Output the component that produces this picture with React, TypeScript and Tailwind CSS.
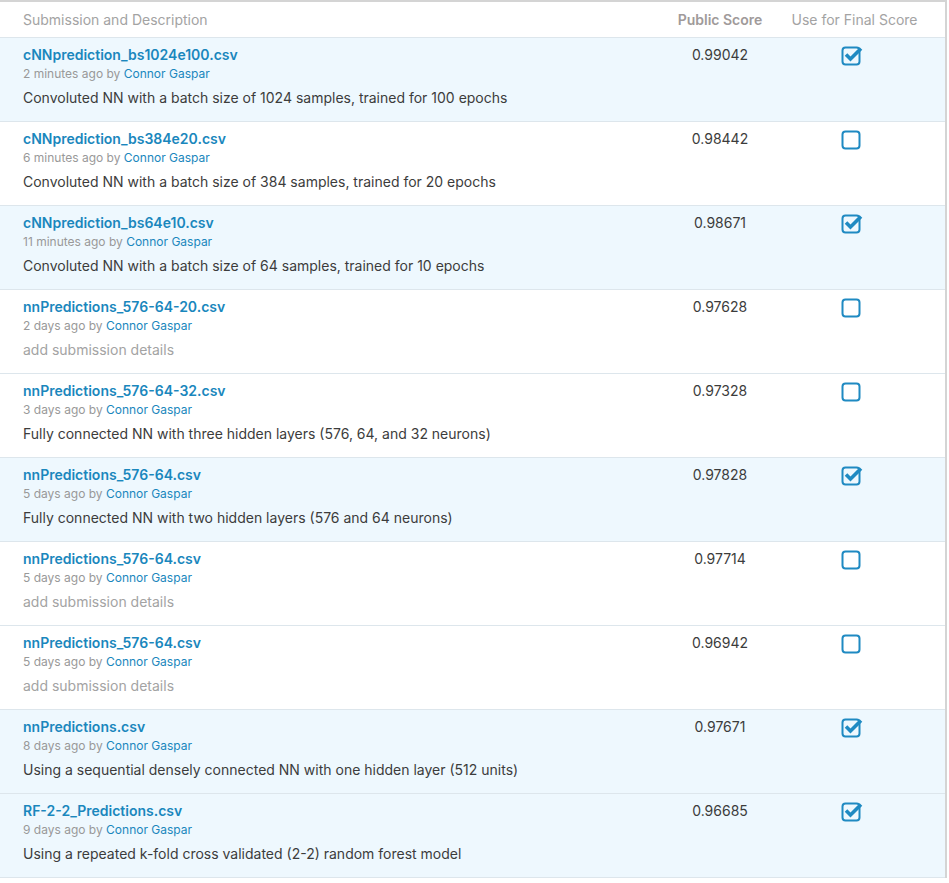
const rows = [
  { file: "cNNprediction_bs1024e100.csv", when: "2 minutes ago", desc: "Convoluted NN with a batch size of 1024 samples, trained for 100 epochs", score: "0.99042", picked: true },
  { file: "cNNprediction_bs384e20.csv", when: "6 minutes ago", desc: "Convoluted NN with a batch size of 384 samples, trained for 20 epochs", score: "0.98442", picked: false },
  { file: "cNNprediction_bs64e10.csv", when: "11 minutes ago", desc: "Convoluted NN with a batch size of 64 samples, trained for 10 epochs", score: "0.98671", picked: true },
  { file: "nnPredictions_576-64-20.csv", when: "2 days ago", desc: "", score: "0.97628", picked: false },
  { file: "nnPredictions_576-64-32.csv", when: "3 days ago", desc: "Fully connected NN with three hidden layers (576, 64, and 32 neurons)", score: "0.97328", picked: false },
  { file: "nnPredictions_576-64.csv", when: "5 days ago", desc: "Fully connected NN with two hidden layers (576 and 64 neurons)", score: "0.97828", picked: true },
  { file: "nnPredictions_576-64.csv", when: "5 days ago", desc: "", score: "0.97714", picked: false },
  { file: "nnPredictions_576-64.csv", when: "5 days ago", desc: "", score: "0.96942", picked: false },
  { file: "nnPredictions.csv", when: "8 days ago", desc: "Using a sequential densely connected NN with one hidden layer (512 units)", score: "0.97671", picked: true },
  { file: "RF-2-2_Predictions.csv", when: "9 days ago", desc: "Using a repeated k-fold cross validated (2-2) random forest model", score: "0.96685", picked: true },
];

const CheckBox = ({ checked }: { checked: boolean }) => (
  <svg width="24" height="24" viewBox="0 0 24 24" className="block">
    <rect x="2.5" y="4.5" width="17" height="17" rx="3" fill="none" stroke="#1f8ac2" strokeWidth="2" />
    {checked && (
      <path d="M6 11.5 L10.5 16 L21 5.5" fill="none" stroke="#1f8ac2" strokeWidth="3.6" strokeLinecap="butt" strokeLinejoin="miter" />
    )}
  </svg>
);

const App = () => {
  return (
    <div className="w-[949px] bg-white" style={{ fontFamily: "Inter, 'Open Sans', sans-serif" }}>
      <div className="w-[947px] border-t-2 border-r-2 border-[#d4d4d4]">
        <div className="grid grid-cols-[660px_120px_1fr] h-[36px] items-center border-b border-[#dde6ec] text-[14px]">
          <div className="pl-[23px] text-[#a3a3a3]">Submission and Description</div>
          <div className="text-center font-semibold text-[#a09a9a]">Public Score</div>
          <div className="text-center pr-[16px] text-[#a3a3a3]">Use for Final Score</div>
        </div>
        {rows.map((r, i) => (
          <div
            key={i}
            className={`grid grid-cols-[660px_120px_1fr] h-[84px] border-b border-[#dde6ec] ${r.picked ? "bg-[#eef8fe]" : "bg-white"}`}
          >
            <div className="pl-[23px] pt-[7px]">
              <div className="text-[14px] leading-[20px] font-semibold text-[#1a87bd]">{r.file}</div>
              <div className="text-[12px] leading-[16px] text-[#999] mt-[1px]">
                {r.when} by <span className="text-[#1a87bd]">Connor Gaspar</span>
              </div>
              {r.desc ? (
                <div className="text-[14px] leading-[20px] text-[#3c3c3c] mt-[6px]">{r.desc}</div>
              ) : (
                <div className="text-[14px] leading-[20px] text-[#a3a3a3] mt-[6px]">add submission details</div>
              )}
            </div>
            <div className="pt-[7px] text-center text-[14px] leading-[20px] text-[#3c3c3c]">{r.score}</div>
            <div className="pt-[5px] flex justify-center pr-[22px]">
              <CheckBox checked={r.picked} />
            </div>
          </div>
        ))}
      </div>
    </div>
  );
};

export default App;
